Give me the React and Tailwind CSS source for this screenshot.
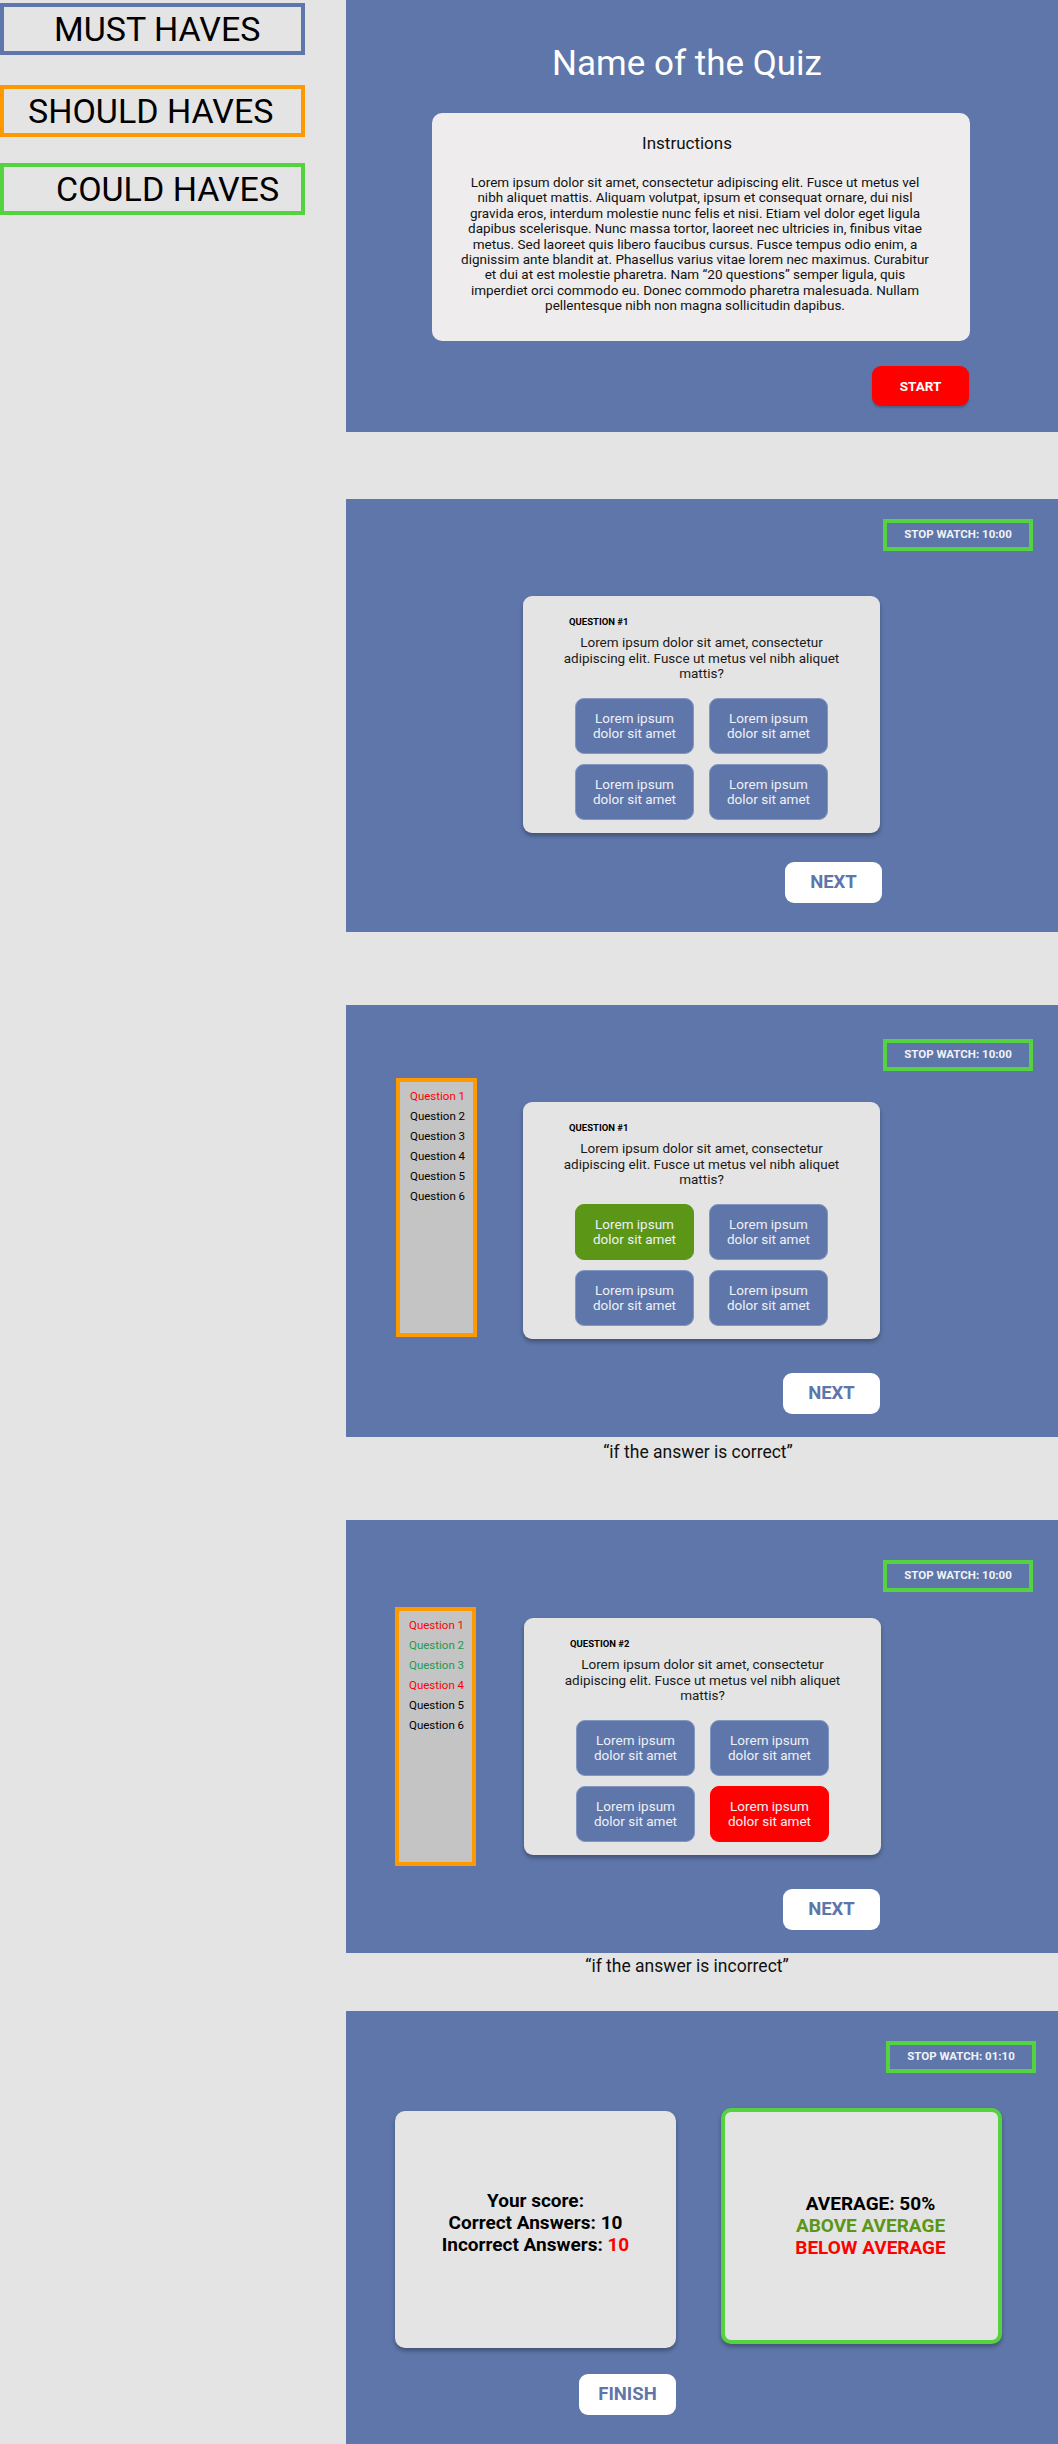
import React from 'react';

const BLUE = 'bg-[#5e76a9]';

const instructionLines = [
  'Lorem ipsum dolor sit amet, consectetur adipiscing elit. Fusce ut metus vel',
  'nibh aliquet mattis. Aliquam volutpat, ipsum et consequat ornare, dui nisl',
  'gravida eros, interdum molestie nunc felis et nisi. Etiam vel dolor eget ligula',
  'dapibus scelerisque. Nunc massa tortor, laoreet nec ultricies in, finibus vitae',
  'metus. Sed laoreet quis libero faucibus cursus. Fusce tempus odio enim, a',
  'dignissim ante blandit at. Phasellus varius vitae lorem nec maximus. Curabitur',
  'et dui at est molestie pharetra. Nam “20 questions” semper ligula, quis',
  'imperdiet orci commodo eu. Donec commodo pharetra malesuada. Nullam',
  'pellentesque nibh non magna sollicitudin dapibus.',
];

const Legend = ({ label, border, pad }) => (
  <div className={`w-[305px] h-[52px] border-[4px] ${border} flex items-center ${pad}`}>
    <span className="text-[34px] leading-none text-black">{label}</span>
  </div>
);

const StopWatch = ({ time, extra = '' }) => (
  <div
    className={`w-[150px] h-[32px] border-[4px] border-[#55d23f] flex items-center justify-center text-[11.5px] font-bold text-[#f1f3f8] ${extra}`}
  >
    STOP WATCH: {time}
  </div>
);

const Answer = ({ state }) => {
  // default / correct / wrong
  const color =
    state === 'correct'
      ? 'bg-[#5b9617] border-[#5b9617]'
      : state === 'wrong'
      ? 'bg-[#ff0000] border-[#ff0000]'
      : 'bg-[#5e76a9] border-[#8396c0]';
  return (
    <div
      className={`h-[56px] rounded-[9px] border ${color} flex items-center justify-center text-center text-[13.5px] leading-[15px] text-[#eef1f7]`}
    >
      Lorem ipsum
      <br />
      dolor sit amet
    </div>
  );
};

const QuestionCard = ({ num, answers, extra = '' }) => (
  <div
    className={`w-[357px] h-[237px] shrink-0 rounded-[9px] bg-[#e4e4e4] shadow-[0_3px_4px_rgba(0,0,0,0.3)] pt-[20px] ${extra}`}
  >
    <div className="pl-[46px] text-[9.5px] leading-[12px] font-bold text-black">QUESTION #{num}</div>
    <p className="mt-[7px] text-center text-[13.5px] leading-[15.5px] text-[#1a1a1a] whitespace-nowrap">
      Lorem ipsum dolor sit amet, consectetur
      <br />
      adipiscing elit. Fusce ut metus vel nibh aliquet
      <br />
      mattis?
    </p>
    <div className="mt-[16px] mx-auto w-[253px] grid grid-cols-2 gap-x-[15px] gap-y-[10px]">
      {answers.map((a, i) => (
        <Answer key={i} state={a} />
      ))}
    </div>
  </div>
);

const Sidebar = ({ colors, extra = '' }) => (
  <div className={`w-[81px] h-[259px] shrink-0 border-[4px] border-[#ff9900] bg-[#c4c4c4] pt-[4px] pl-[10px] ${extra}`}>
    {colors.map((c, i) => (
      <div key={i} className={`text-[11.5px] leading-[20px] whitespace-nowrap ${c}`}>
        Question {i + 1}
      </div>
    ))}
  </div>
);

const NavButton = ({ label, extra = '' }) => (
  <div
    className={`w-[97px] h-[41px] rounded-[9px] bg-white flex items-center justify-center text-[18.5px] font-bold text-[#5e76a9] ${extra}`}
  >
    {label}
  </div>
);

export default function App() {
  return (
    <div
      className="w-[1058px] min-h-[2444px] bg-[#e4e4e4] flex"
      style={{ fontFamily: 'Roboto, "Noto Sans", sans-serif' }}
    >
      {/* legend */}
      <div className="w-[346px] shrink-0 pt-[3px] flex flex-col">
        <Legend label="MUST HAVES" border="border-[#5e76a9]" pad="pl-[50px]" />
        <div className="mt-[30px]">
          <Legend label="SHOULD HAVES" border="border-[#ff9900]" pad="pl-[24px]" />
        </div>
        <div className="mt-[26px]">
          <Legend label="COULD HAVES" border="border-[#55d23f]" pad="pl-[52px]" />
        </div>
      </div>

      <div className="w-[712px] shrink-0 flex flex-col">
        {/* start screen */}
        <div className={`h-[432px] ${BLUE} pt-[44px]`}>
          <h1 className="pr-[30px] text-center text-[35px] leading-[40px] font-normal text-white">
            Name of the Quiz
          </h1>
          <div className="mt-[29px] ml-[86px] w-[538px] h-[228px] rounded-[10px] bg-[#eeeced] pt-[20px]">
            <h2 className="pr-[28px] text-center text-[17px] leading-[20px] text-[#111]">Instructions</h2>
            <p className="mt-[22px] pr-[12px] text-center text-[13.5px] leading-[15.4px] text-[#111] whitespace-nowrap">
              {instructionLines.map((l, i) => (
                <React.Fragment key={i}>
                  {l}
                  <br />
                </React.Fragment>
              ))}
            </p>
          </div>
          <div className="mt-[25px] ml-[526px] w-[97px] h-[40px] rounded-[9px] bg-[#ff0000] shadow-[0_2px_2px_rgba(0,0,0,0.2)] flex items-center justify-center text-[13.5px] font-bold text-white">
            START
          </div>
        </div>

        {/* question screen */}
        <div className={`mt-[67px] h-[433px] ${BLUE} pt-[20px]`}>
          <div className="flex justify-end pr-[25px]">
            <StopWatch time="10:00" />
          </div>
          <QuestionCard num={1} answers={['', '', '', '']} extra="mt-[45px] ml-[177px]" />
          <NavButton label="NEXT" extra="mt-[29px] ml-[439px]" />
        </div>

        {/* correct answer */}
        <div className={`mt-[73px] h-[432px] ${BLUE} pt-[34px]`}>
          <div className="flex justify-end pr-[25px]">
            <StopWatch time="10:00" />
          </div>
          <div className="mt-[7px] flex items-start pl-[50px]">
            <Sidebar colors={['text-[#ff0000]', 'text-black', 'text-black', 'text-black', 'text-black', 'text-black']} />
            <QuestionCard num={1} answers={['correct', '', '', '']} extra="mt-[24px] ml-[46px]" />
          </div>
          <NavButton label="NEXT" extra="mt-[34px] ml-[437px]" />
        </div>
        <div className="mt-[5px] pr-[8px] text-center text-[17.5px] leading-[20px] text-[#111]">
          “if the answer is correct”
        </div>

        {/* wrong answer */}
        <div className={`mt-[58px] h-[433px] ${BLUE} pt-[40px]`}>
          <div className="flex justify-end pr-[25px]">
            <StopWatch time="10:00" extra="h-[31px]" />
          </div>
          <div className="mt-[15px] flex items-start pl-[49px]">
            <Sidebar
              colors={['text-[#ff0000]', 'text-[#1e9a4c]', 'text-[#1e9a4c]', 'text-[#ff0000]', 'text-black', 'text-black']}
              extra="w-[80px] h-[258px]"
            />
            <QuestionCard num={2} answers={['', '', '', 'wrong']} extra="mt-[11px] ml-[48px]" />
          </div>
          <NavButton label="NEXT" extra="mt-[23px] ml-[437px]" />
        </div>
        <div className="mt-[3px] pr-[30px] text-center text-[17.5px] leading-[20px] text-[#111]">
          “if the answer is incorrect”
        </div>

        {/* results */}
        <div className={`mt-[35px] h-[433px] ${BLUE} pt-[30px]`}>
          <div className="flex justify-end pr-[22px]">
            <StopWatch time="01:10" extra="h-[31px]" />
          </div>
          <div className="mt-[35px] flex items-start pl-[49px]">
            <div className="mt-[3px] w-[281px] h-[237px] shrink-0 rounded-[10px] bg-[#e4e4e4] shadow-[0_3px_4px_rgba(0,0,0,0.3)] pt-[79px] text-center text-[19px] leading-[22px] font-bold text-black">
              Your score:
              <br />
              Correct Answers: 10
              <br />
              Incorrect Answers: <span className="text-[#ff0000]">10</span>
            </div>
            <div className="ml-[45px] w-[281px] h-[236px] shrink-0 rounded-[10px] border-[4px] border-[#55d23f] bg-[#e4e4e4] shadow-[0_3px_4px_rgba(0,0,0,0.3)] pt-[81px] pl-[18px] text-center text-[19px] leading-[22px] font-bold">
              <div className="text-black">AVERAGE: 50%</div>
              <div className="text-[#5b9617]">ABOVE AVERAGE</div>
              <div className="text-[#ff0000]">BELOW AVERAGE</div>
            </div>
          </div>
          <NavButton label="FINISH" extra="mt-[26px] ml-[233px] h-[40px]" />
        </div>
      </div>
    </div>
  );
}
